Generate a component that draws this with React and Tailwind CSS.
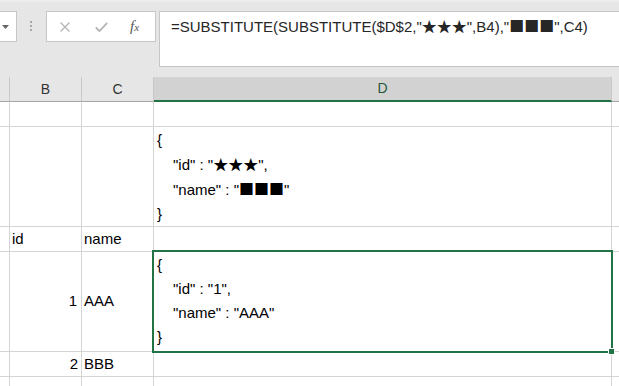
import React from "react";

const SYM = "font-['Noto_Sans_CJK_JP',sans-serif]";

function Cell({ w, className = "", children }) {
  return (
    <div className={`${w} shrink-0 h-full border-r border-[#d4d4d4] ${className}`}>
      {children}
    </div>
  );
}

function Row({ h, children }) {
  return (
    <div className={`flex ${h} border-b border-[#d4d4d4]`}>{children}</div>
  );
}

function Json({ id, name }) {
  return (
    <div className="pt-[1px] pl-[3px] leading-[24px] text-black whitespace-nowrap">
      <div>{"{"}</div>
      <div className="pl-[16px]">
        "id" : "{id}",
      </div>
      <div className="pl-[16px]">
        "name" : "{name}"
      </div>
      <div>{"}"}</div>
    </div>
  );
}

export default function App() {
  return (
    <div className="w-[619px] h-[386px] overflow-hidden bg-white relative font-['Liberation_Sans','Noto_Sans_CJK_JP',sans-serif] text-[15px]">
      {/* toolbar */}
      <div className="h-[77px] bg-[#e6e6e6] border-t-2 border-[#eeeeee] pt-[9px] flex items-start">
        <div className="w-[17px] h-[31px] shrink-0 bg-white border border-l-0 border-[#c6c6c6] flex items-center pl-[2px]">
          <svg width="7" height="4" viewBox="0 0 7 4">
            <path d="M0 0 H7 L3.5 4 Z" fill="#666" />
          </svg>
        </div>
        <div className="ml-[13px] mt-[10px] flex flex-col gap-[2px]">
          <div className="w-[2px] h-[2px] bg-[#a8a8a8]" />
          <div className="w-[2px] h-[2px] bg-[#a8a8a8]" />
          <div className="w-[2px] h-[2px] bg-[#a8a8a8]" />
        </div>
        <div className="ml-[14px] w-[110px] h-[31px] shrink-0 bg-white border border-[#c6c6c6] flex items-center">
          <svg className="ml-[13px]" width="10" height="10" viewBox="0 0 10 10">
            <path d="M0.5 0.5 L9.5 9.5 M9.5 0.5 L0.5 9.5" stroke="#b4b4b4" strokeWidth="1.3" />
          </svg>
          <svg className="ml-[25px]" width="13" height="10" viewBox="0 0 13 10">
            <path d="M0.8 5.5 L4.5 9 L12.2 0.8" stroke="#b4b4b4" strokeWidth="1.8" fill="none" />
          </svg>
          <span className="ml-[22px] italic text-[#555] font-['Liberation_Serif',serif] text-[15px] leading-none">
            f<span className="text-[11px]">x</span>
          </span>
        </div>
        <div className="ml-[3px] flex-1 h-[56px] bg-white border border-r-0 border-[#c6c6c6] pl-[11px] pt-[5px] text-[#262626] whitespace-nowrap leading-[17px]">
          =SUBSTITUTE(SUBSTITUTE($D$2,"<span className={SYM}>★★★</span>",B4),"<span className={SYM}>■■■</span>",C4)
        </div>
      </div>

      {/* column header */}
      <div className="flex h-[25px] bg-[#e6e6e6] text-[14px] text-[#333]">
        <div className="w-[10px] shrink-0 border-r border-b border-r-[#c8c8c8] border-b-[#a6a6a6]" />
        <div className="w-[72px] shrink-0 border-r border-b border-r-[#c8c8c8] border-b-[#a6a6a6] flex items-center justify-center">B</div>
        <div className="w-[72px] shrink-0 border-r border-b border-r-[#c8c8c8] border-b-[#a6a6a6] flex items-center justify-center">C</div>
        <div className="w-[458px] shrink-0 border-r border-r-[#c8c8c8] border-b-2 border-b-[#217346] bg-[#d2d2d2] text-[#22593a] flex items-center justify-center">D</div>
        <div className="flex-1 border-b border-b-[#a6a6a6]" />
      </div>

      {/* rows */}
      <Row h="h-[25px]">
        <Cell w="w-[10px]" />
        <Cell w="w-[72px]" />
        <Cell w="w-[72px]" />
        <Cell w="w-[458px]" />
      </Row>
      <Row h="h-[100px]">
        <Cell w="w-[10px]" />
        <Cell w="w-[72px]" />
        <Cell w="w-[72px]" />
        <Cell w="w-[458px]">
          <Json
            id={<span className={SYM}>★★★</span>}
            name={<span className={SYM}>■■■</span>}
          />
        </Cell>
      </Row>
      <Row h="h-[25px]">
        <Cell w="w-[10px]" />
        <Cell w="w-[72px]" className="flex items-center pl-[2px] text-black">id</Cell>
        <Cell w="w-[72px]" className="flex items-center pl-[2px] text-black">name</Cell>
        <Cell w="w-[458px]" />
      </Row>
      <Row h="h-[100px]">
        <Cell w="w-[10px]" />
        <Cell w="w-[72px]" className="flex items-center justify-end pr-[4px] text-black">1</Cell>
        <Cell w="w-[72px]" className="flex items-center pl-[2px] text-black">AAA</Cell>
        <Cell w="w-[458px]">
          <Json id="1" name="AAA" />
        </Cell>
      </Row>
      <Row h="h-[25px]">
        <Cell w="w-[10px]" />
        <Cell w="w-[72px]" className="flex items-center justify-end pr-[3px] text-black">2</Cell>
        <Cell w="w-[72px]" className="flex items-center pl-[2px] text-black">BBB</Cell>
        <Cell w="w-[458px]" />
      </Row>
      <div className="flex h-[20px]">
        <Cell w="w-[10px]" />
        <Cell w="w-[72px]" />
        <Cell w="w-[72px]" />
        <Cell w="w-[458px]" />
      </div>

      {/* selection */}
      <div className="absolute left-[152px] top-[250px] w-[461px] h-[103px] border-2 border-[#217346]" />
      <div className="absolute left-[608px] top-[348px] w-[7px] h-[7px] bg-[#217346] border border-white" />
    </div>
  );
}
